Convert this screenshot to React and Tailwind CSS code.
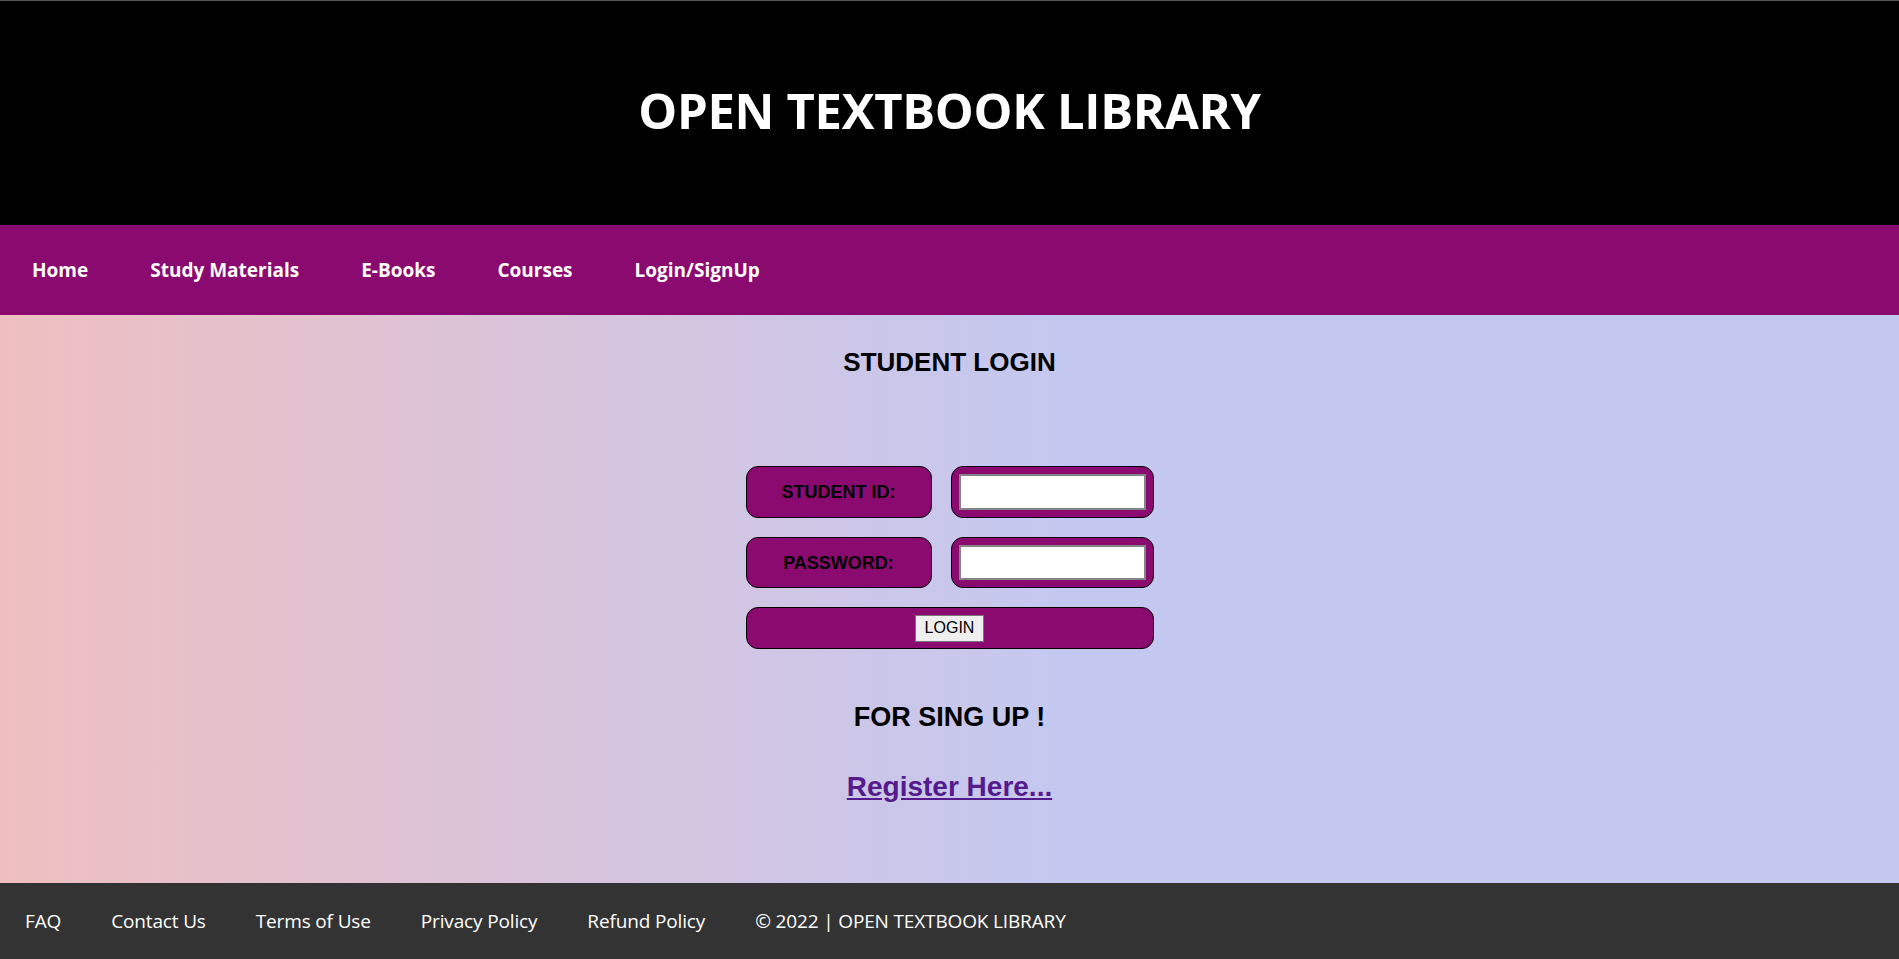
import React from 'react';

// Simple login page: header, nav, login form, footer
const navItems = ['Home', 'Study Materials', 'E-Books', 'Courses', 'Login/SignUp'];
const footerItems = ['FAQ', 'Contact Us', 'Terms of Use', 'Privacy Policy', 'Refund Policy', '© 2022 | OPEN TEXTBOOK LIBRARY'];

const App = () => {
  return (
    <div className="min-h-screen flex flex-col font-['Open_Sans',sans-serif]">
      {/* Title banner */}
      <header className="h-[225px] bg-black border-t border-[#555] flex items-center justify-center pb-[6px]">
        <h1 className="text-white font-bold text-[49px] leading-none tracking-[-0.3px]">OPEN TEXTBOOK LIBRARY</h1>
      </header>

      {/* Navigation */}
      <nav className="h-[90px] bg-[#8b0a70] flex items-center pl-px">
        {navItems.map((item) => (
          <a key={item} href="#" className="px-[31px] text-white font-bold text-[19px] leading-none">
            {item}
          </a>
        ))}
      </nav>

      {/* Login area */}
      <main className="h-[568px] bg-[linear-gradient(to_right,#efbfc0_0%,#d9c4da_28%,#c4c8f0_56%,#c4c8f0_100%)] flex flex-col items-center pt-[32px] font-['Liberation_Sans',Arial,sans-serif]">
        <h2 className="text-black font-bold text-[26px] leading-[30px]">STUDENT LOGIN</h2>

        <form className="mt-[89px] grid grid-cols-[186px_203px] gap-[19px]" onSubmit={(e) => e.preventDefault()}>
          <div className="h-[52px] bg-[#8b0a70] border border-black rounded-[12px] flex items-center justify-center">
            <label className="text-black font-bold text-[18px] leading-none">STUDENT ID:</label>
          </div>
          <div className="h-[52px] bg-[#8b0a70] border border-black rounded-[12px] p-[7px]">
            <input type="text" className="w-full h-full bg-white border-2 border-[#858585] outline-none" />
          </div>

          <div className="h-[51px] bg-[#8b0a70] border border-black rounded-[12px] flex items-center justify-center">
            <label className="text-black font-bold text-[18px] leading-none">PASSWORD:</label>
          </div>
          <div className="h-[51px] bg-[#8b0a70] border border-black rounded-[12px] p-[7px]">
            <input type="password" className="w-full h-full bg-white border-2 border-[#858585] outline-none" />
          </div>

          <div className="col-span-2 h-[42px] bg-[#8b0a70] border border-black rounded-[12px] flex items-center justify-center">
            <button type="submit" className="h-[27px] px-[9px] bg-[#efefef] border border-[#767676] text-black text-[16px] leading-none font-['Liberation_Sans',Arial,sans-serif]">
              LOGIN
            </button>
          </div>
        </form>

        <h2 className="mt-[52px] text-black font-bold text-[27px] leading-[32px]">FOR SING UP !</h2>
        <a href="#" className="mt-[37px] text-[#551a8b] font-bold text-[28px] leading-[33px] underline">
          Register Here...
        </a>
      </main>

      {/* Footer */}
      <footer className="h-[76px] bg-[#333333] flex items-center">
        {footerItems.map((item) => (
          <span key={item} className="px-[25px] text-white text-[19px] leading-none tracking-[-0.15px]">
            {item}
          </span>
        ))}
      </footer>
    </div>
  );
};

export default App;
